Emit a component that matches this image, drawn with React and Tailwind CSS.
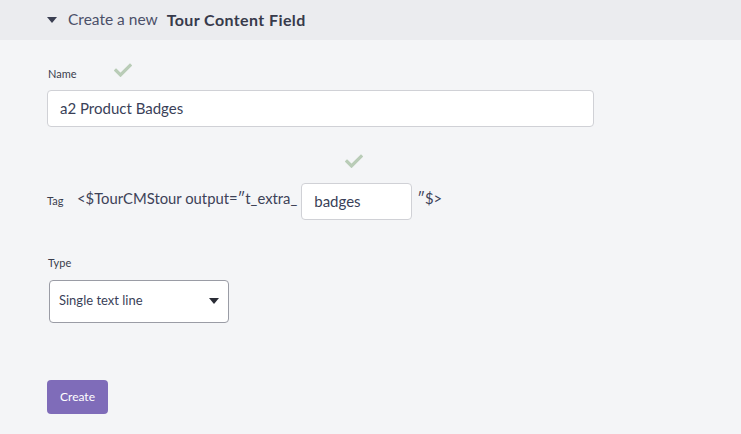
import React from "react";

const Check = ({ className }) => (
  <svg viewBox="0 0 18 14" className={className} fill="none">
    <path d="M2 7.5 L6.5 12 L16 2.5" stroke="#b9ccb7" strokeWidth="3.2" strokeLinecap="square" />
  </svg>
);

const App = () => {
  return (
    <div className="min-h-screen bg-[#f4f5f7] font-['Lato',sans-serif] text-[#3d4257]">
      <div className="h-10 bg-[#ebecef] flex items-center pl-[47px]">
        <span className="w-0 h-0 border-l-[5px] border-r-[5px] border-t-[6px] border-l-transparent border-r-transparent border-t-[#3b3f52] mr-[11px]" />
        <span className="text-[15.5px] text-[#4b5069]">Create a new</span>
        <span className="text-[16px] font-bold tracking-[0.4px] text-[#373a4b] ml-[9px]">Tour Content Field</span>
      </div>

      <div className="pl-[47px] pt-[22px]">
        <div className="flex items-center h-[24px]">
          <span className="text-[11px] text-[#3a3d4d] ml-px">Name</span>
          <Check className="w-[18px] h-[14px] ml-[37px] -mt-[8px]" />
        </div>
        <div className="mt-[4px] w-[547px] h-[37px] bg-white border border-[#d0d1d6] rounded-[4px] flex items-center px-3">
          <span className="text-[15px] text-[#3a3f58]">a2 Product Badges</span>
        </div>

        <div className="mt-[27px] flex">
          <div className="w-[254px]" />
          <Check className="w-[18px] h-[14px] ml-[44px]" />
        </div>
        <div className="mt-[15px] flex items-center">
          <span className="text-[11px] text-[#3a3d4d] w-[30px]">Tag</span>
          <span className="text-[14.8px] text-[#3d4257] -mt-[6px]">&lt;$TourCMStour output=″t_extra_</span>
          <div className="ml-[4px] w-[111px] h-[37px] bg-white border border-[#d0d1d6] rounded-[4px] flex items-center pl-[12px]">
            <span className="text-[15px] text-[#3a3f58]">badges</span>
          </div>
          <span className="text-[14.8px] text-[#3d4257] ml-[5px] -mt-[6px]">″$&gt;</span>
        </div>

        <div className="mt-[35px] text-[11px] text-[#3a3d4d] ml-px">Type</div>
        <div className="mt-[8px] ml-[2px] w-[180px] h-[43px] bg-white border border-[#9a9ca5] rounded-[4px] flex items-center justify-between pl-[9px] pr-[9px]">
          <span className="text-[13px] text-[#3a3f58]">Single text line</span>
          <span className="w-0 h-0 border-l-[5px] border-r-[5px] border-t-[6px] border-l-transparent border-r-transparent border-t-[#2a2c36]" />
        </div>

        <button className="mt-[57px] w-[61px] h-[34px] bg-[#7f6cb9] rounded-[4px] text-white text-[12px]">
          Create
        </button>
      </div>
    </div>
  );
};

export default App;
